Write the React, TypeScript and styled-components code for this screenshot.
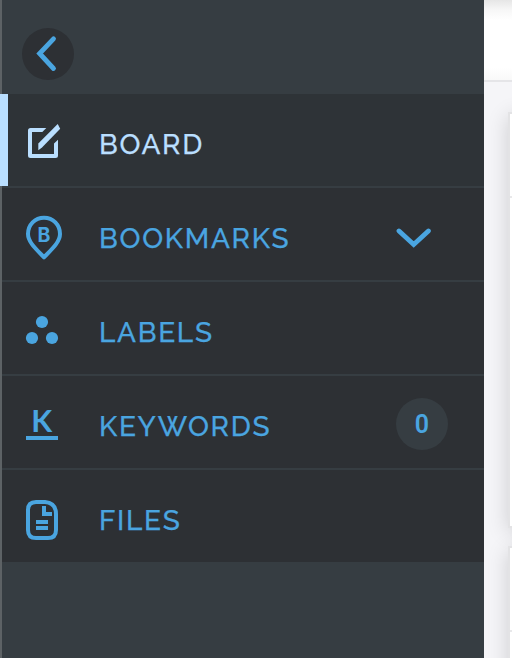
import React from 'react';
import styled, { createGlobalStyle } from 'styled-components';

const GlobalStyle = createGlobalStyle`
  * { box-sizing: border-box; }
  body { margin: 0; overflow: hidden; background: #f5f5f8; }
`;

const Page = styled.div`
  display: flex;
  width: 512px;
  height: 658px;
  overflow: hidden;
  font-family: Raleway, Lato, sans-serif;
`;

const Sidebar = styled.nav`
  flex: none;
  width: 484px;
  height: 658px;
  background: linear-gradient(90deg, #5d6265 2px, #363d42 2px);
`;

const SidebarHeader = styled.div`
  height: 94px;
  padding: 28px 0 0 22px;
`;

const BackButton = styled.button`
  display: block;
  width: 52px;
  height: 52px;
  padding: 0;
  border: 0;
  border-radius: 50%;
  background: #2d3034;
  svg { display: block; }
`;

const Row = styled.a<{ $active?: boolean }>`
  display: flex;
  align-items: center;
  height: ${p => (p.$active ? 92 : 94)}px;
  margin-left: ${p => (p.$active ? 0 : 2)}px;
  padding-left: ${p => (p.$active ? 12 : 18)}px;
  padding-right: 36px;
  border-top: ${p => (p.$active ? '0' : '2px solid #363d42')};
  border-left: ${p => (p.$active ? '8px solid #badfff' : '0')};
  background: ${p => (p.$active ? '#2e3337' : '#2d3034')};
  color: ${p => (p.$active ? '#badfff' : '#4aa5e0')};
`;

const RowIcon = styled.svg`
  flex: none;
  display: block;
  width: 48px;
  height: 92px;
  margin-right: 31px;
`;

const Label = styled.span`
  flex: 1;
  padding-top: 10px;
  font-size: 28px;
  font-weight: 500;
  line-height: 34px;
  white-space: nowrap;
  letter-spacing: 1.7px;
  -webkit-text-stroke: 0.25px currentColor;
`;

const Count = styled.span`
  display: flex;
  align-items: center;
  justify-content: center;
  width: 52px;
  height: 52px;
  margin-top: 4px;
  border-radius: 50%;
  background: #363d42;
  font: 600 25px Roboto, sans-serif;
`;

const Chevron = styled.svg`
  display: block;
  width: 52px;
  height: 92px;
`;

const Content = styled.main`
  flex: 1;
  min-width: 0;
  overflow: hidden;
  background: #f5f5f8;
`;

const TopBar = styled.header`
  height: 82px;
  border-bottom: 2px solid #e5e5e8;
  background: linear-gradient(#e6e6e6 0, #f7f7f7 10px, #fff 20px, #fff 68px, #f9f9f9 80px);
`;

const Cards = styled.div`
  display: flex;
  flex-direction: column;
  gap: 18px;
  padding: 30px 0 0 24px;
`;

const Card = styled.section`
  width: 300px;
  height: 416px;
  border: 2px solid #e3e3e5;
  background: #fff;
  box-shadow: 0 4px 20px rgba(0, 0, 0, 0.16);
`;

const CardHeader = styled.div`
  height: 84px;
  border-bottom: 2px solid #e8e8ea;
`;

const BoardIcon = () => (
  <RowIcon viewBox="20 0 48 92" fill="currentColor">
    <path d="M46.3 34 42.3 38H32V60H54V49.5L58 45.8V61.5Q58 64 55.5 64H30.5Q28 64 28 61.5V36.5Q28 34 30.5 34Z" />
    <path d="M38.3 49.5 57.7 30 60.2 34.8 42 53.5 38.3 56.3Z" />
  </RowIcon>
);

const BookmarkIcon = () => (
  <RowIcon viewBox="20 0 48 92" fill="none">
    <path
      d="M44 29.7C35 29.7 28 36.7 28 46C28 54 36 61 44 69.3C52 61 60 54 60 46C60 36.7 53 29.7 44 29.7Z"
      stroke="currentColor"
      strokeWidth="4"
      strokeLinejoin="round"
    />
    <text x="44" y="54" textAnchor="middle" fill="currentColor" fontFamily="Inter, sans-serif" fontSize="19.5" fontWeight="700">B</text>
  </RowIcon>
);

const LabelsIcon = () => (
  <RowIcon viewBox="20 0 48 92" fill="currentColor">
    <circle cx="42" cy="40" r="6.1" />
    <circle cx="32" cy="56" r="6.1" />
    <circle cx="52" cy="56" r="6.1" />
  </RowIcon>
);

const KeywordsIcon = () => (
  <RowIcon viewBox="20 0 48 92" fill="currentColor">
    <text x="31.2" y="56" fontFamily="Lato, sans-serif" fontSize="30.5" fontWeight="700">K</text>
    <path d="M26 60H58V64H26Z" />
  </RowIcon>
);

const FileIcon = () => (
  <RowIcon viewBox="20 0 48 92" fill="none">
    <path d="M36 32H45Q56 33 56 44V60Q56 68 48 68H36Q28 68 28 60V40Q28 32 36 32Z" stroke="currentColor" strokeWidth="4" />
    <path d="M42 36H46V42H52V46H42ZM36 50H48V54H36ZM36 56H48V60H36Z" fill="currentColor" />
  </RowIcon>
);

const ChevronIcon = () => (
  <Chevron viewBox="0 0 52 92" fill="none">
    <path d="M3 43 17.7 56.6 32.4 43" stroke="currentColor" strokeWidth="4.8" strokeLinecap="round" />
  </Chevron>
);

type Item = { label: string; icon: React.ReactNode; active?: boolean; extra?: React.ReactNode };

const items: Item[] = [
  { label: 'BOARD', icon: <BoardIcon />, active: true },
  { label: 'BOOKMARKS', icon: <BookmarkIcon />, extra: <ChevronIcon /> },
  { label: 'LABELS', icon: <LabelsIcon /> },
  { label: 'KEYWORDS', icon: <KeywordsIcon />, extra: <Count>0</Count> },
  { label: 'FILES', icon: <FileIcon /> },
];

export default function App() {
  return (
    <Page>
      <GlobalStyle />
      <Sidebar>
        <SidebarHeader>
          <BackButton aria-label="Back">
            <svg width="52" height="52" viewBox="0 0 52 52" fill="none">
              <path d="M31.5 10.8 17.6 25.5 31.5 40.5" stroke="#4aa5e0" strokeWidth="4.8" strokeLinecap="round" />
            </svg>
          </BackButton>
        </SidebarHeader>
        {items.map(item => (
          <Row key={item.label} $active={item.active}>
            {item.icon}
            <Label>{item.label}</Label>
            {item.extra}
          </Row>
        ))}
      </Sidebar>
      <Content>
        <TopBar />
        <Cards>
          <Card><CardHeader /></Card>
          <Card><CardHeader /></Card>
        </Cards>
      </Content>
    </Page>
  );
}
